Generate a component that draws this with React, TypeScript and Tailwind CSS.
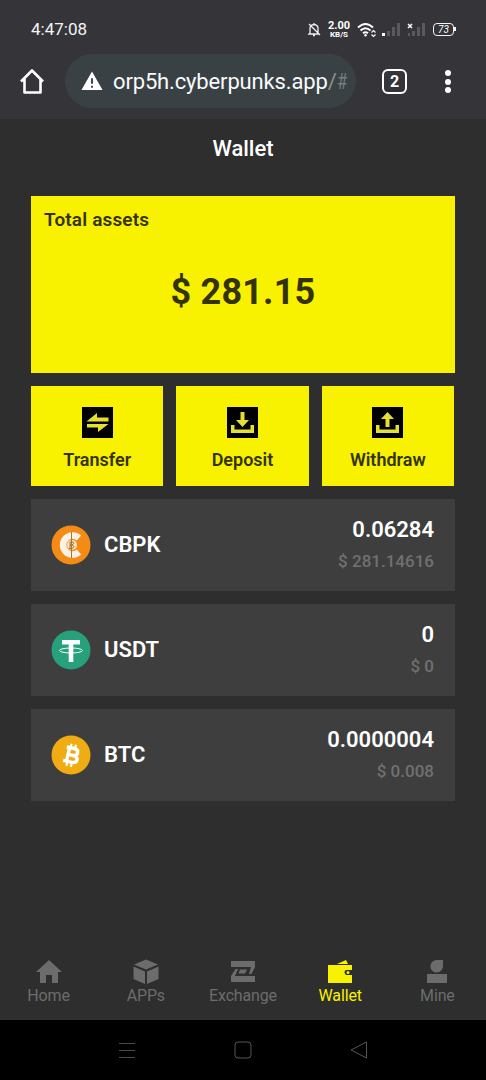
import type { ReactNode } from "react";

const Status = () => {
  return (
    <div className="flex h-[59px] items-center justify-between pl-[31px] pr-[32px] text-white">
      <span className="text-[17px] leading-none text-gray-100">4:47:08</span>
      <div className="flex items-center">
        {/* muted bell */}
        <svg className="mr-[1px]" width="14" height="15" viewBox="0 0 14 15" fill="none" stroke="#eee" strokeWidth="1.3">
          <path d="M3 11V6.5Q3 3 7 2.5Q11 3 11 6.5V11L12 12H2L3 11ZM6 13.5H8M2 2L13 13M7 1V2.5" />
        </svg>
        <div className="ml-[6px] flex w-[22px] flex-col items-center font-bold">
          <span className="text-[11px] leading-[11px]">2.00</span>
          <span className="text-[8px] leading-[8px]">KB/S</span>
        </div>
        <svg className="ml-[7px]" width="20" height="16" viewBox="0 0 20 16" fill="none" stroke="#fff" strokeWidth="2">
          <path d="M1 5.5Q8.500 -1.500 16 5.500M3.500 8.500Q8.500 4 13.500 8.500M6 11.300Q8.500 9.200 11 11.300" />
          <circle cx="8.500" cy="13.300" r="1.200" fill="#fff" stroke="none" />
          <path d="M14.500 10.500L16.500 8.500L18.500 10.500M14.500 12.500L16.500 14.500L18.500 12.500" strokeWidth="1.100" />
        </svg>
        <svg className="ml-[5px]" width="19" height="15" viewBox="0 0 19 15">
          <rect x="0" y="11" width="3" height="3" fill="#fff" />
          <path d="M5 9H8V14H5ZM10 5H13V14H10ZM15 1H18V14H15Z" fill="#59595e" />
        </svg>
        <svg className="ml-[6px]" width="19" height="15" viewBox="0 0 19 15">
          <path d="M1 11H3V14H1ZM5 9H8V14H5ZM10 5H13V14H10ZM15 1H18V14H15Z" fill="#59595e" />
          <path d="M1 2L5 6M5 2L1 6" stroke="#fff" strokeWidth="1.500" />
        </svg>
        <div className="relative ml-[7px] flex h-[13px] w-[21px] items-center justify-center rounded-[4px] border-[1.500px] border-gray-100 text-[10px] italic leading-none">
          73
          <span className="absolute -right-[3px] top-[3px] h-[4px] w-[2px] bg-gray-100" />
        </div>
      </div>
    </div>
  );
};

const Browser = () => {
  return (
    <div className="flex h-[60px] items-start pl-[18px] pr-[35px] pt-[1px]">
      <svg className="mt-[6px]" width="28" height="30" viewBox="0 0 28 30" fill="none" stroke="#fff" strokeWidth="2.600">
        <path d="M3 15.500L14 4.500L25 15.500M6.500 13V26.500H22.500V13" strokeLinejoin="round" />
      </svg>
      <div className="-mt-[6px] ml-[19px] flex h-[54px] w-[291px] items-center rounded-full bg-[#3a4144] pl-[16px]">
        <svg width="22" height="20" viewBox="0 0 23 20">
          <path d="M11.500 0L22.500 19.500H.500Z" fill="#fff" />
          <path d="M11.500 7V13M11.500 15V17" stroke="#3a4144" strokeWidth="2" />
        </svg>
        <span className="ml-[10px] whitespace-nowrap pt-[1px] text-[22px] leading-[30px] tracking-[-0.150px] text-gray-50">
          orp5h.cyberpunks.app
          <span className="text-[#8b9092]">/</span>
          <span className="inline-block origin-left scale-x-75 text-[#777d80]">#</span>
        </span>
      </div>
      <div className="ml-[26px] mt-[9px] flex size-[25px] items-center justify-center rounded-[6px] border-[2.500px] border-white text-[16px] font-bold leading-none text-white">2</div>
      <div className="ml-auto mt-[10px] flex flex-col gap-[2.500px]">
        <i className="size-[6px] rounded-full bg-white" />
        <i className="size-[6px] rounded-full bg-white" />
        <i className="size-[6px] rounded-full bg-white" />
      </div>
    </div>
  );
};

const TransferIcon = () => (
  <svg width="31" height="31" viewBox="0 0 31 31" className="bg-black" fill="#e4df32">
    <path d="M4.500 14.500L15 6V10.500H26.500V14.500ZM26.500 17L16 25V20.500H5V17Z" />
  </svg>
);

const DepositIcon = () => (
  <svg width="31" height="31" viewBox="0 0 31 31" className="bg-black" fill="#e4df32">
    <path d="M13.500 5H17.500V13H22L15.500 20L9 13H13.500ZM4 18H7.500V22.500H23.500V18H27V26H4Z" />
  </svg>
);

const WithdrawIcon = () => (
  <svg width="31" height="31" viewBox="0 0 31 31" className="bg-black" fill="#e4df32">
    <path d="M15.500 5L22 12H17.500V20H13.500V12H9ZM4 18H7.500V22.500H23.500V18H27V26H4Z" />
  </svg>
);

const CbpkIcon = () => (
  <svg width="40" height="40" viewBox="0 0 40 40">
    <circle cx="20" cy="20" r="19.500" fill="#f58b17" />
    <path d="M28 13A9.500 9.500 0 1 0 28 27" fill="none" stroke="#f9f2e6" strokeWidth="6.500" />
    <circle cx="21" cy="20" r="5" fill="#f9e3c4" />
    <path d="M20.500 7V33M19 17H22Q24 18.500 21 20H19M21 20Q25 22 21 23.500H18M19 17V23.500" fill="none" stroke="#a8722f" strokeWidth="1" />
  </svg>
);

const UsdtIcon = () => (
  <svg width="40" height="40" viewBox="0 0 40 40">
    <circle cx="20" cy="20" r="19.500" fill="#26a17b" />
    <path d="M11 10H29V14.500H22.300V32H17.700V14.500H11Z" fill="#fff" />
    <ellipse cx="20" cy="20.500" rx="11.500" ry="2.500" fill="none" stroke="#fff" strokeWidth="1" />
  </svg>
);

const BtcIcon = () => (
  <svg width="40" height="40" viewBox="0 0 40 40">
    <circle cx="20" cy="20" r="19.500" fill="#f0ac13" />
    <g transform="rotate(13 20 20)" fill="none" stroke="#fff">
      <path d="M17 13V27M14 13H21.500Q26 13 26 16.500T21.500 20H17M21.500 20Q27 20 27 23.500T21.500 27H13.500" strokeWidth="3.400" />
      <path d="M18 9V12M22.500 9V12M18 28V31.500M22.500 28V31.500" strokeWidth="2.200" />
    </g>
  </svg>
);

const actions = [
  { label: "Transfer", icon: <TransferIcon /> },
  { label: "Deposit", icon: <DepositIcon /> },
  { label: "Withdraw", icon: <WithdrawIcon /> },
];

const coins = [
  { name: "CBPK", amount: "0.06284", value: "$ 281.14616", icon: <CbpkIcon /> },
  { name: "USDT", amount: "0", value: "$ 0", icon: <UsdtIcon /> },
  { name: "BTC", amount: "0.0000004", value: "$ 0.008", icon: <BtcIcon /> },
];

const Tab = ({ label, active, children }: { label: string; active?: boolean; children: ReactNode }) => (
  <div className={active ? "flex flex-1 flex-col items-center text-[#f8f200]" : "flex flex-1 flex-col items-center text-[#6c6c6c]"}>
    <svg width="28" height="26" viewBox="0 0 28 26" fill="currentColor">
      {children}
    </svg>
    <span className="mt-[1px] text-[16px] leading-[20px] tracking-[-0.150px]">{label}</span>
  </div>
);

const App = () => {
  return (
    <div className="flex h-[1080px] w-[486px] flex-col overflow-hidden bg-[#2e2e2e] font-['Roboto',sans-serif]">
      <header className="h-[119px] shrink-0 bg-[#353439]">
        <Status />
        <Browser />
      </header>

      <main className="flex flex-1 flex-col px-[31px]">
        <h1 className="pt-[16px] text-center text-[22px] font-medium leading-[28px] text-white">Wallet</h1>

        {/* Total */}
        <section className="mt-[33px] h-[177px] bg-[#f8f200] px-[13px] pt-[10px] text-[#343208]">
          <h2 className="text-[19px] font-semibold leading-[28px] tracking-[0.150px]">Total assets</h2>
          <p className="mt-[34px] text-center text-[36px] font-bold leading-[48px] tracking-[0.200px]">$ 281.15</p>
        </section>

        {/* Actions */}
        <div className="mr-[1px] mt-[13px] grid grid-cols-3 gap-[13px]">
          {actions.map((action) => (
            <button key={action.label} className="flex h-[100px] flex-col items-center bg-[#f8f200] pt-[21px] text-[#343208]">
              {action.icon}
              <span className="mt-[9px] text-[18px] font-semibold leading-[26px]">{action.label}</span>
            </button>
          ))}
        </div>

        {/* Coins */}
        <div className="mt-[13px] flex flex-col gap-[13px]">
          {coins.map((coin) => (
            <div key={coin.name} className="flex h-[92px] items-center bg-[#3e3e3e] pl-[20px] pr-[21px]">
              {coin.icon}
              <span className="ml-[13px] pb-[2px] text-[22px] font-semibold text-white">{coin.name}</span>
              <div className="ml-auto text-right">
                <p className="pt-[1px] text-[22px] font-semibold leading-[32px] text-white">{coin.amount}</p>
                <p className="text-[17px] font-medium leading-[31px] text-[#707070]">{coin.value}</p>
              </div>
            </div>
          ))}
        </div>
      </main>

      <nav className="flex h-[61px] shrink-0">
        <Tab label="Home">
          <path d="M14 1L27 13H23V24H17V16H11V24H5V13H1Z" />
        </Tab>
        <Tab label="APPs">
          <path d="M14 .500L26 5.500L14 10.500L2 5.500ZM1.500 7.500L13 12.500V25L1.500 20ZM26.500 7.500L15 12.500V25L26.500 20Z" />
        </Tab>
        <Tab label="Exchange">
          <path d="M2 2H26V8L22.500 15H20L22 8H2ZM2 23H26V17H6L9 10H6.500L2 17Z" />
          <path d="M11 10.500H18L16 14.500H9.500Z" />
        </Tab>
        <Tab label="Wallet" active>
          <path d="M11 5L20 1L22 5ZM2 6H26V11H20Q17 13 20 16H26V24H2Z" />
          <circle cx="22" cy="13.500" r="1.500" />
        </Tab>
        <Tab label="Mine">
          <path d="M14 1H20V7A6.300 6.300 0 1 1 14 1ZM4 15H24V24H4Z" />
        </Tab>
      </nav>

      <footer className="flex h-[60px] shrink-0 items-center justify-center gap-[97px] bg-black">
        <svg width="20" height="20" viewBox="0 0 20 20" stroke="#4b4b4b">
          <path d="M2 3.500H18M2 10.500H18M2 17.500H18" />
        </svg>
        <svg width="18" height="18" viewBox="0 0 18 18" fill="none" stroke="#555">
          <rect x="1" y="1" width="16" height="16" rx="3" />
        </svg>
        <svg width="20" height="20" viewBox="0 0 20 20" fill="none" stroke="#555">
          <path d="M2 10L17.500 2V18Z" />
        </svg>
      </footer>
    </div>
  );
};

export default App;
